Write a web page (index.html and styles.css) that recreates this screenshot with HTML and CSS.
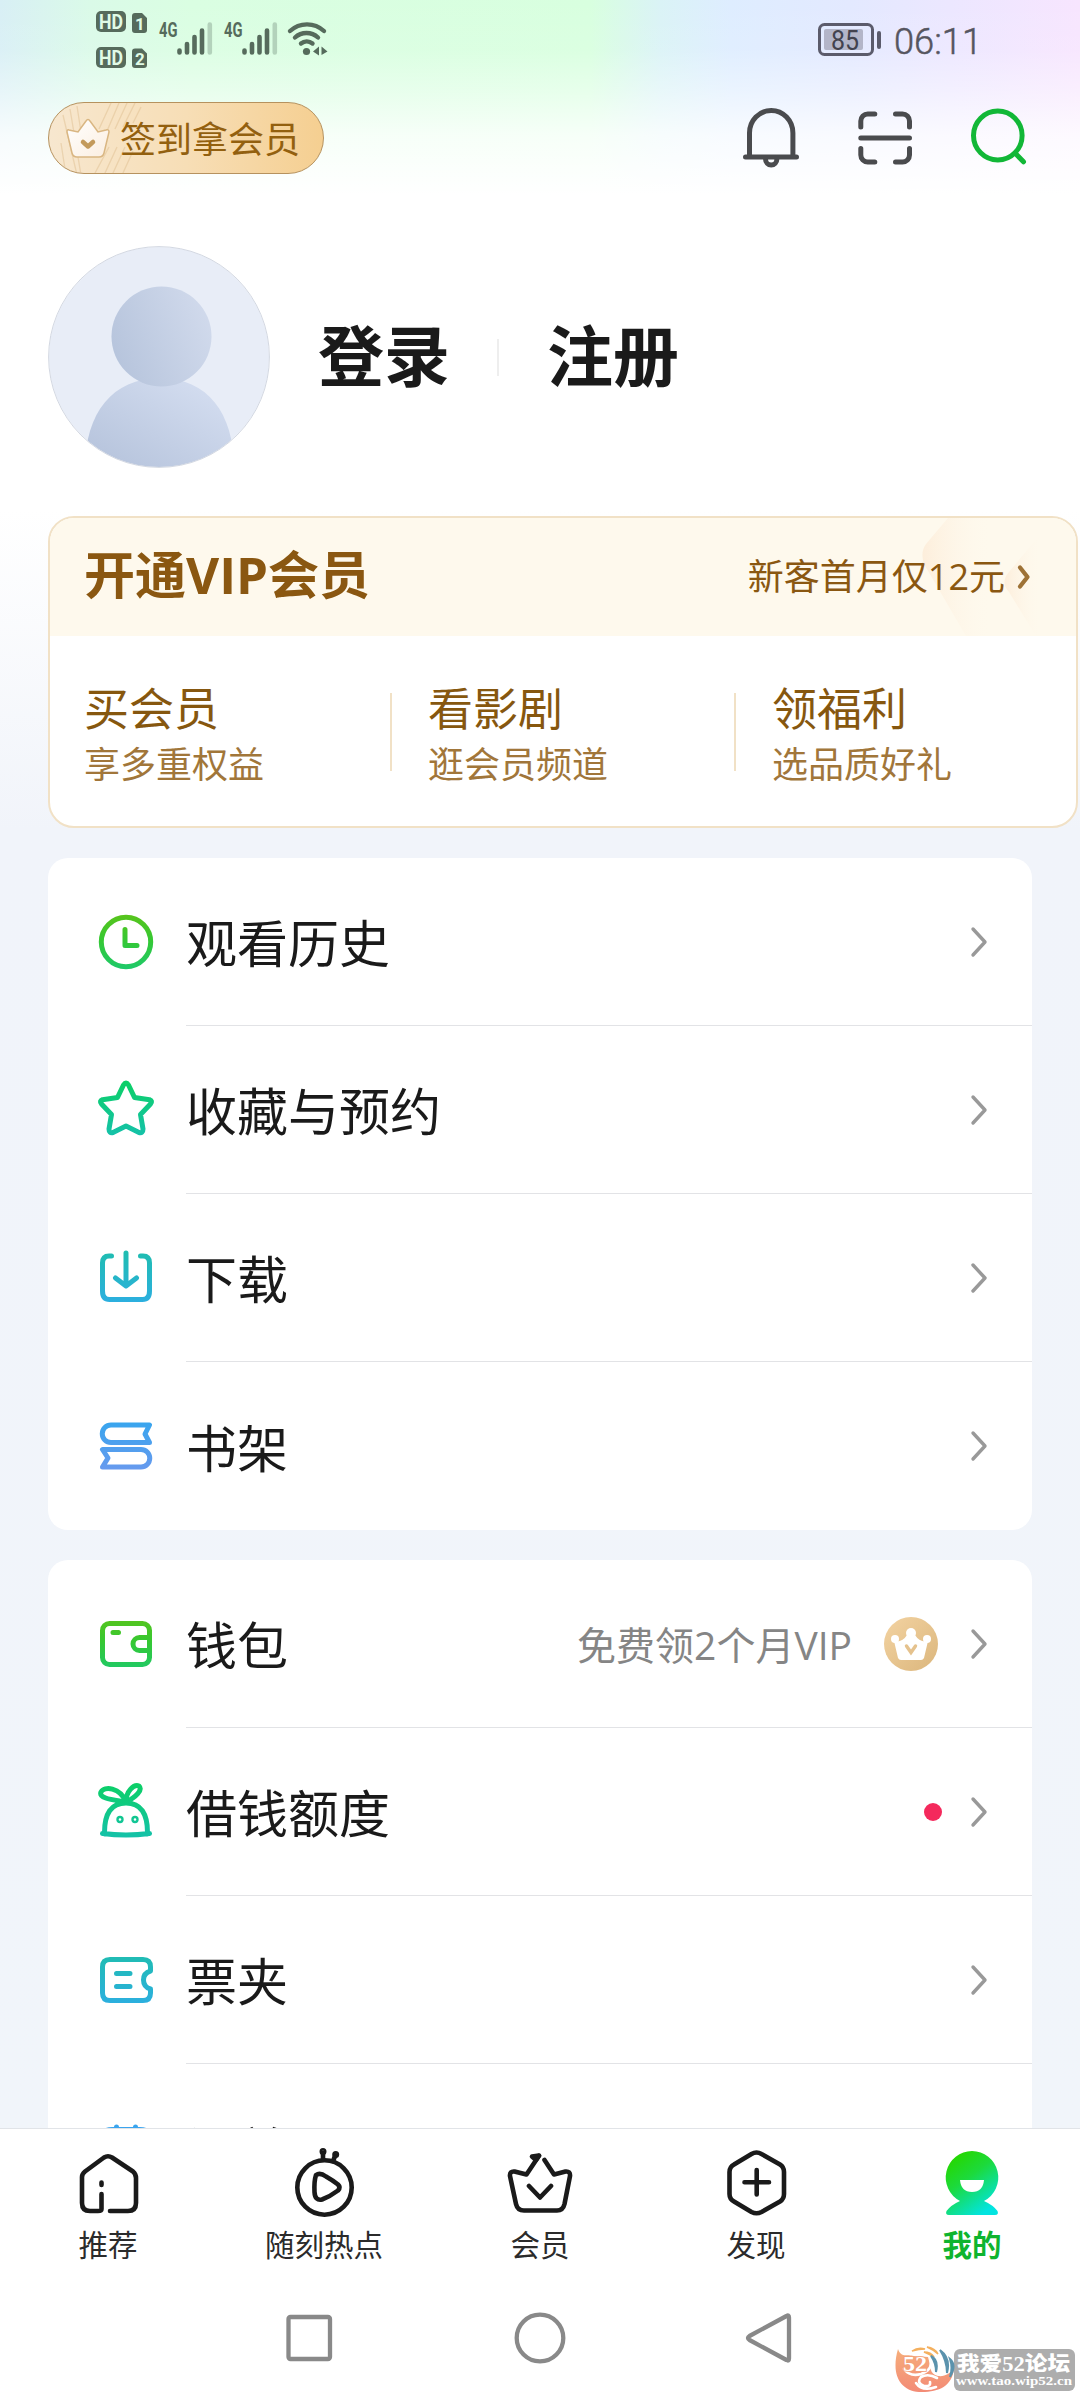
FILE: index.html
```html
<!DOCTYPE html>
<html lang="zh-CN">
<head>
<meta charset="utf-8">
<title>我的</title>
<link rel="stylesheet" href="styles.css">
</head>
<body>
<svg class="defs" width="0" height="0" aria-hidden="true">
  <defs>
    <linearGradient id="g1" gradientUnits="userSpaceOnUse" x1="0" y1="3" x2="0" y2="57"><stop offset="0" stop-color="#58c41c"/><stop offset=".45" stop-color="#36c832"/><stop offset="1" stop-color="#1ec96a"/></linearGradient>
    <linearGradient id="g2" gradientUnits="userSpaceOnUse" x1="0" y1="3" x2="0" y2="57"><stop offset="0" stop-color="#0ccf68"/><stop offset="1" stop-color="#15c1ab"/></linearGradient>
    <linearGradient id="g3" gradientUnits="userSpaceOnUse" x1="0" y1="3" x2="0" y2="57"><stop offset="0" stop-color="#1fbdb0"/><stop offset="1" stop-color="#2daee2"/></linearGradient>
    <linearGradient id="g4" gradientUnits="userSpaceOnUse" x1="0" y1="3" x2="0" y2="57"><stop offset="0" stop-color="#35a6ee"/><stop offset="1" stop-color="#6a99ee"/></linearGradient>
    <linearGradient id="gava" x1="0" y1="1" x2="1" y2="0"><stop offset="0" stop-color="#b3c1da"/><stop offset="1" stop-color="#d8e1f3"/></linearGradient>
    <linearGradient id="ghead" x1="0" y1=".7" x2="1" y2=".3"><stop offset="0" stop-color="#b6c4dc"/><stop offset="1" stop-color="#d1daec"/></linearGradient>
    <linearGradient id="gcoin" x1="0" y1="0" x2="1" y2="1"><stop offset="0" stop-color="#f3d3a2"/><stop offset="1" stop-color="#dbb67c"/></linearGradient>
    <linearGradient id="gme" gradientUnits="userSpaceOnUse" x1="15" y1="15" x2="52" y2="66"><stop offset="0" stop-color="#25d700"/><stop offset=".4" stop-color="#1cda3c"/><stop offset="1" stop-color="#02e4e0"/></linearGradient>
    <linearGradient id="gcrown" x1="0" y1="0" x2="1" y2="1"><stop offset="0" stop-color="#fff"/><stop offset="1" stop-color="#fbeee0"/></linearGradient>
    <linearGradient id="glogo" x1="0" y1="0" x2="0" y2="1"><stop offset="0" stop-color="#f6ae7b"/><stop offset="1" stop-color="#f38b76"/></linearGradient>
    <symbol id="chev" viewBox="0 0 20 36"><path d="M4 5 L16 18 L4 31" fill="none" stroke="#999" stroke-width="3.4" stroke-linecap="round" stroke-linejoin="round"/></symbol>
  </defs>
</svg>
<div class="page">
  <main class="content">
    <div class="status">
      <svg class="status-left" width="240" height="64" viewBox="92 8 240 64">
        <g fill="#566b5c">
          <rect x="96" y="11" width="30" height="21" rx="5"/><rect x="96" y="47" width="30" height="21" rx="5"/>
          <path d="M135 13h7l5 5v12a3 3 0 0 1-3 3h-9a3 3 0 0 1-3-3V16a3 3 0 0 1 3-3zM135 48.500h7l5 5V65a3 3 0 0 1-3 3h-9a3 3 0 0 1-3-3V51.500a3 3 0 0 1 3-3z"/>
        </g>
        <g class="hd"><text x="99" y="28.500" textLength="24" lengthAdjust="spacingAndGlyphs">HD</text><text x="99" y="64.500" textLength="24" lengthAdjust="spacingAndGlyphs">HD</text><text x="135" y="29.500" class="sm">1</text><text x="135" y="65" class="sm">2</text></g>
        <g class="fourg"><text x="159" y="37" textLength="18.500" lengthAdjust="spacingAndGlyphs">4G</text><text x="224" y="37" textLength="18.500" lengthAdjust="spacingAndGlyphs">4G</text></g>
        <g stroke="#566b5c" stroke-width="4.600" stroke-linecap="round"><path d="M179.500 50.500v2M187 44v8.500M194.500 37v15.500M202 30.500v22"/><path d="M244.500 50.500v2M252 44v8.500M259.500 37v15.500M267 30.500v22"/><path d="M209.800 24.500v28M274.800 24.500v28" stroke="#b3d2bb"/></g>
        <g fill="none" stroke="#566b5c" stroke-width="4.400" stroke-linecap="round"><path d="M290 31a25 25 0 0 1 34 0M295 37.500a17 17 0 0 1 23 0M301 43.500a9 9 0 0 1 11.500 0"/></g>
        <circle cx="306.500" cy="51.500" r="3.600" fill="#566b5c"/><path d="M313 51.500l6-5v9zM321.500 46.500l6 5l-6 3.500z" fill="#566b5c"/>
      </svg>
      <svg class="status-right" width="170" height="44" viewBox="814 18 170 44">
        <rect x="819.500" y="24.500" width="53" height="30" rx="5" fill="none" stroke="#5b5b6b" stroke-width="3"/>
        <rect x="824" y="29" width="39" height="21" rx="2" fill="#b3b5c8"/><rect x="877" y="31" width="4" height="18" rx="2" fill="#5b5b6b"/>
        <text x="831" y="49.500" class="bat" textLength="28" lengthAdjust="spacingAndGlyphs">85</text>
        <text x="894" y="54" class="time" textLength="88" lengthAdjust="spacingAndGlyphs">06:11</text>
      </svg>
    </div>
    <header class="top">
      <div class="pill">
        <svg class="pill-lines" width="276" height="72" viewBox="0 0 276 72"><path d="M14 12l14 60M21 6l11 66M28 3l4 26M12 40l4 26M62 0L50 26M70 0L58 28M78 0L66 26M86 0L74 24M92 4L84 20M60 44L46 70M68 44L56 70M76 44L64 70M84 48L74 70" stroke="#dfc091" stroke-opacity=".5" stroke-width="1.300" fill="none"/></svg>
        <svg class="pill-crown" width="46" height="42" viewBox="0 0 46 42"><path d="M4 13Q2 12 2 15L7 36Q8 40 12 40H34Q38 40 39 36L44 15Q44 12 41 13L33 15L25 4Q23 1 21 4L13 15Z" fill="url(#gcrown)" stroke="#d9b682" stroke-width="1.500"/><path d="M18 25l5 4.500l5-4.500" fill="none" stroke="#c39a5c" stroke-width="4.500" stroke-linecap="round" stroke-linejoin="round"/></svg>
        <span>签到拿会员</span>
      </div>
      <div class="actions">
        <svg width="60" height="64" viewBox="741 106 60 64" fill="none" stroke="#4a4b4e" stroke-width="5" stroke-linecap="round"><path d="M749.500 156V133a21.700 22.500 0 0 1 43.400 0V156M745.500 157h51M765.500 159a5.700 6 0 0 0 11.400 0"/></svg>
        <svg width="60" height="64" viewBox="855 106 60 64" fill="none" stroke="#4a4b4e" stroke-width="5" stroke-linecap="round"><path d="M860.800 127v-6a7 7 0 0 1 7-7h7M895.500 114h7a7 7 0 0 1 7 7v6M909.500 148.500v6.500a7 7 0 0 1-7 7h-7M874.800 162h-7a7 7 0 0 1-7-7v-6.500M860.800 138h48.700"/></svg>
        <svg width="60" height="64" viewBox="969 106 60 64" fill="none" stroke="#12b737" stroke-width="5" stroke-linecap="round"><ellipse cx="997.800" cy="135.500" rx="24.300" ry="24.500"/><path d="M1015 153l8.500 8.800"/></svg>
      </div>
    </header>
    <section class="profile">
      <svg class="avatar" width="222" height="222" viewBox="0 0 222 222"><clipPath id="avc"><circle cx="111" cy="111" r="110"/></clipPath><g clip-path="url(#avc)"><circle cx="111" cy="111" r="111" fill="#e8edf7"/><path d="M37 222C37 168 64 132 112 132S186 168 186 222Z" fill="url(#gava)"/><circle cx="113.500" cy="90.500" r="50" fill="url(#ghead)"/></g><circle cx="111" cy="111" r="110.400" fill="none" stroke="#d3d8e2"/></svg>
      <a class="login">登录</a><i class="split"></i><a class="login next">注册</a>
    </section>
    <section class="vip">
      <div class="vip-head">
        <svg class="vip-deco" width="170" height="118" viewBox="0 0 170 118"><defs><linearGradient id="d1"><stop offset="0" stop-color="#fdeedb"/><stop offset=".5" stop-color="#fef8ec" stop-opacity="0"/></linearGradient></defs><path d="M20 26L42 0H150L104 118H60L18 46Q14 34 20 26Z" fill="url(#d1)"/><path d="M103 54L148 0H170V118H130L103 74Q94 64 103 54Z" fill="url(#d1)"/></svg>
        <h2>开通VIP会员</h2><span class="offer">新客首月仅12元</span>
        <svg class="offer-chev" width="16" height="28" viewBox="0 0 16 28"><path d="M4 4.500L11.500 14L4 23.500" fill="none" stroke="#9e7236" stroke-width="4.300" stroke-linecap="round" stroke-linejoin="round"/></svg>
      </div>
      <div class="vip-cols">
        <div><b>买会员</b><span>享多重权益</span></div>
        <div><b>看影剧</b><span>逛会员频道</span></div>
        <div><b>领福利</b><span>选品质好礼</span></div>
      </div>
    </section>
    <section class="card">
      <div class="row"><svg class="ico" viewBox="0 0 60 60" stroke="url(#g1)"><circle cx="30" cy="30" r="24.700"/><path d="M29 17.500V33.500H41"/></svg><div class="line"><span>观看历史</span><svg class="chev"><use href="#chev"/></svg></div></div>
      <div class="row"><svg class="ico" viewBox="0 0 60 60" stroke="url(#g2)"><path d="M27.500 5Q30 1 32.500 5L38.500 17.500L53.500 19.700Q57 21 54.500 24L44.500 34.500L47 49Q47 53.500 43 52.500L30 46L17 52.500Q13 53.500 13 49L15.500 34.500L5.500 24Q3 21 6.500 19.700L21.500 17.500Z"/></svg><div class="line"><span>收藏与预约</span><svg class="chev"><use href="#chev"/></svg></div></div>
      <div class="row"><svg class="ico" viewBox="0 0 60 60" stroke="url(#g3)"><path d="M15.500 8H13Q6.500 8 6.500 15V43Q6.500 51.500 13.500 51.500H46.500Q53.500 51.500 53.500 43V15Q53.500 8 47 8H44.500M30 5V37.500M19.500 30L30 38L40.500 30"/></svg><div class="line"><span>下载</span><svg class="chev"><use href="#chev"/></svg></div></div>
      <div class="row"><svg class="ico" viewBox="0 0 60 60" stroke="url(#g4)"><path d="M53.500 9H15A8.700 8.700 0 0 0 15 26.500H53.500L49 18Z M6.500 33.500H45A8.700 8.700 0 0 1 45 51H6.500L12 42Z"/></svg><div class="line"><span>书架</span><svg class="chev"><use href="#chev"/></svg></div></div>
    </section>
    <section class="card second">
      <div class="row"><svg class="ico" viewBox="0 0 60 60" stroke="url(#g1)"><rect x="6.500" y="9.500" width="47" height="41" rx="7"/><path d="M52 23.500H43.500A6.500 6.500 0 0 0 43.500 36.500H52M17 18.500H22.500"/></svg><div class="line"><span>钱包</span><em>免费领2个月VIP</em><svg class="coin" width="54" height="54" viewBox="0 0 54 54"><circle cx="27" cy="27" r="27" fill="url(#gcoin)"/><circle cx="27" cy="16" r="5" fill="#fff"/><circle cx="11" cy="22" r="4" fill="#fff"/><circle cx="43" cy="22" r="4" fill="#fff"/><path d="M10 24Q18 26 23 18H31Q36 26 44 24L40 41Q39 43 37 43H17Q15 43 14 41Z" fill="#fff"/><path d="M22.500 29L27 35.500L31.500 29" fill="none" stroke="#e5c28d" stroke-width="3.400" stroke-linecap="round"/></svg><svg class="chev"><use href="#chev"/></svg></div></div>
      <div class="row"><svg class="ico" viewBox="0 0 60 60" stroke="url(#g2)"><path d="M8.500 52Q8 21 30 21T51.500 52M6.500 51.500Q30 54.500 53.500 51.500M30 20C24 5 8 4 5 10C2 17 20 18 30 20ZM30 20C30 9 38 2 43 4C47 8 40 15 30 20Z"/><circle cx="24" cy="37.500" r="1.200"/><circle cx="39" cy="37.500" r="1.200"/></svg><div class="line"><span>借钱额度</span><i class="dot"></i><svg class="chev"><use href="#chev"/></svg></div></div>
      <div class="row"><svg class="ico" viewBox="0 0 60 60" stroke="url(#g3)"><path d="M14 9.500H47Q54.500 9.500 54.500 17V21Q47.500 23 47.500 30T54.500 39V43Q54.500 50.500 47 50.500H14Q6.500 50.500 6.500 43V17Q6.500 9.500 14 9.500ZM20.500 23.500H34M20.500 36.500H34"/></svg><div class="line"><span>票夹</span><svg class="chev"><use href="#chev"/></svg></div></div>
      <div class="row"><svg class="ico" viewBox="0 0 60 60" stroke="url(#g4)"><path d="M20.500 9V14M39.500 9V14M9 14Q10 11.500 16 11.500H44Q50 11.500 51 14V52H9Z"/></svg><div class="line"><span>订单</span><svg class="chev"><use href="#chev"/></svg></div></div>
    </section>
  </main>
  <footer class="bottom">
    <nav class="tabs">
      <a><svg width="76" height="76" viewBox="70 2145 76 76"><path d="M101.500 2182.500v2.500M101.500 2194V2209Q101.500 2211 98 2211H90Q82 2211 82 2203V2177Q82 2174 85 2171.500L104 2157.500Q108 2155 112 2157.500L133 2171.500Q136 2174 136 2178V2203Q136 2211 128 2211H110"/></svg><span>推荐</span></a>
      <a><svg width="76" height="76" viewBox="286 2145 76 76"><circle cx="324.500" cy="2187.500" r="27.200"/><path d="M316 2175Q320 2172 326 2176.500Q333 2180.500 338 2184.500Q341 2187.500 338 2190.500Q330 2196.500 322 2199.500Q315 2201 314.500 2192Q314 2181 316 2175ZM323 2152.500V2159M335.500 2155L333 2161"/><circle cx="323" cy="2151.500" r="1.200"/><circle cx="335.700" cy="2154.500" r="1.200"/></svg><span>随刻热点</span></a>
      <a><svg width="76" height="76" viewBox="502 2145 76 76"><path d="M539 2155.800L526.500 2174.500L514.500 2171.500Q509.500 2171 510 2176L516 2204Q517.500 2210.500 524 2210.500H557Q563 2210.500 564.500 2204L570 2176Q570.500 2171 565.500 2171.500L554 2174.500L544.500 2160M529 2186L540 2197.500L551 2186"/><path d="M532 2156.500L539 2155.500L536 2160Z"/></svg><span>会员</span></a>
      <a><svg width="76" height="76" viewBox="718 2145 76 76"><path d="M751.500 2154Q756.500 2151 761.500 2154L780 2164.500Q784 2167 784 2172V2194Q784 2199 780 2201.500L761.500 2212Q756.500 2214.500 751.500 2212L734 2201.500Q729.500 2199 729.500 2194V2172Q729.500 2167 734 2164.500ZM756.700 2170V2194.500M744.500 2182.300H769"/></svg><span>发现</span></a>
      <a class="on"><svg width="76" height="76" viewBox="0 0 76 76"><path d="M38 6A26.500 26.500 0 0 1 50 56Q59 60 63.500 66Q65 70 61 70H15Q11 70 12.500 66Q17 60 26 56A26.500 26.500 0 0 1 38 6Z"/><path d="M26 35H50Q49 47 38 47T26 35Z" fill="#fff"/></svg><span>我的</span></a>
    </nav>
    <div class="sys">
      <svg width="54" height="54" viewBox="0 0 54 54"><rect x="6.500" y="6" width="41.500" height="42" rx="2"/></svg>
      <svg width="54" height="54" viewBox="0 0 54 54"><circle cx="27" cy="27" r="23.300"/></svg>
      <svg width="54" height="54" viewBox="4 0 54 54"><path d="M46.500 5Q49 3.500 49 6.500V47.500Q49 50.500 46.500 49L9.500 29Q6.500 27 9.500 25Z"/></svg>
    </div>
  </footer>
  <div class="mark">
    <svg width="64" height="50" viewBox="0 0 64 50"><path d="M4 4C7 13 13 9 20 11L34 12C37 22 35 29 44 31C51 32 56 28 60 24C58 41 45 47 28 47C8 47-4 32 4 4Z" fill="url(#glogo)"/><path d="M10 24Q16 32 27 29Q36 26 37 19M43 33Q34 28 27 32Q22 38 30 41Q37 42 36 37M22 38Q28 47 42 42" fill="none" stroke="#fff" stroke-width="2.600" stroke-linecap="round"/><path d="M18 6Q24 2 31 4Q25 4 18 6ZM33 2Q41 3 44 9Q40 5 33 2ZM30 7Q37 7 40 12Q35 9 30 7Z" fill="#f4b05f" stroke="#f4b05f" stroke-width="1.500"/><path d="M46 5Q57 13 53 28Q53 16 46 5ZM37 11Q45 15 42 27Q42 18 37 11ZM56 14Q63 20 56 32Q59 23 56 14Z" fill="#5b93ad" stroke="#5b93ad" stroke-width="2"/><text x="9" y="26" class="m52" textLength="24" lengthAdjust="spacingAndGlyphs">52</text></svg>
    <div class="mark-text"><svg width="120" height="42" viewBox="0 0 120 42"><text x="3" y="22" class="m1" textLength="113" lengthAdjust="spacingAndGlyphs">我爱52论坛</text><text x="2" y="36" class="m2" textLength="116" lengthAdjust="spacingAndGlyphs">www.tao.wip52.cn</text></svg></div>
  </div>
</div>
</body>
</html>
```
FILE: styles.css
```css
* { box-sizing: border-box; }
body { margin: 0; font-family: "Open Sans", "Noto Sans CJK SC", sans-serif; color: #1a1a1a; }
svg { display: block; flex: none; }
.defs { position: absolute; }
.page { position: relative; width: 1080px; height: 2400px; display: flex; flex-direction: column; overflow: hidden; }
.content {
  flex: 1; min-height: 0; overflow: hidden; padding-left: 48px;
  background:
    linear-gradient(180deg, rgba(255,255,255,0) 0, rgba(255,255,255,.08) 50px, rgba(255,255,255,.38) 90px, rgba(255,255,255,.78) 135px, #fff 195px) 0 0 / 100% 200px no-repeat,
    linear-gradient(90deg, #d8eff5 0, #dafae8 90px, #dafee2 190px, #d8ffdf 590px, #daf3f6 660px, #deedff 730px, #e3e9ff 850px, #ece7ff 950px, #f7e5fe 1080px) 0 0 / 100% 200px no-repeat,
    linear-gradient(180deg, #fff 0, #fff 510px, #f1f4fa 830px, #f1f5fa 100%);
}

.status { height: 102px; display: flex; justify-content: space-between; align-items: flex-start; }
.status-left { margin: 8px 0 0 44px; }
.status-right { margin: 18px 96px 0 0; }
.status text { font-family: Roboto, sans-serif; }
.hd text { font-weight: 700; font-size: 21px; fill: #e0fbe6; }
.hd .sm { font-size: 17px; }
.fourg text { font-weight: 700; font-size: 21px; fill: #566b5c; }
.bat { font-size: 28px; fill: #42424e; }
.time { font-size: 36.500px; font-weight: 300; fill: #55555f; stroke: #55555f; stroke-width: .5px; }

.top { height: 72px; display: flex; justify-content: space-between; align-items: center; padding-right: 51px; }
.pill {
  position: relative; width: 276px; height: 72px; display: flex; align-items: center; gap: 9px; padding-left: 16px;
  border: 1px solid #b6925e; border-radius: 36px; overflow: hidden;
  background: linear-gradient(90deg, #f7e7cf, #f7deb6 50%, #f5cf91);
  font-size: 36px; line-height: 50px; color: #93600f;
}
.pill-lines { position: absolute; inset: 0; }
.pill-crown, .pill span { position: relative; }
.pill span { padding-top: 4px; }
.actions { display: flex; gap: 54px; }

.profile { height: 222px; margin-top: 72px; display: flex; align-items: center; }
.login { font-size: 66px; font-weight: 700; line-height: 90px; margin-left: 48px; padding-bottom: 4px; }
.login.next { margin-left: 48px; }
.split { width: 2px; height: 37px; background: #eee; margin-left: 47px; }

.vip { width: 1030px; height: 312px; margin-top: 48px; border: 2px solid #f1e1c6; border-radius: 26px; background: #fff; overflow: hidden; }
.vip-head { position: relative; height: 118px; padding: 0 44px 0 34px; display: flex; align-items: center; background: #fef9ed; color: #8a5711; }
.vip-deco { position: absolute; right: 0; top: 0; }
.vip-head h2 { margin: 0; padding-bottom: 6px; font-size: 51px; line-height: 70px; font-weight: 700; }
.offer { position: relative; margin-left: auto; padding-bottom: 5px; font-size: 36px; }
.offer-chev { position: relative; margin-left: 11px; }
.vip-cols { display: grid; grid-template-columns: 340px 344px 1fr; padding-top: 46px; }
.vip-cols div { display: flex; flex-direction: column; padding-left: 34px; position: relative; }
.vip-cols div + div { padding-left: 38px; }
.vip-cols div + div::before { content: ""; position: absolute; left: 0; top: 11px; width: 2px; height: 78px; background: #f1e1c6; }
.vip-cols b { font-weight: 400; font-size: 45px; line-height: 54px; color: #86570f; }
.vip-cols span { margin-top: 4px; font-size: 36px; line-height: 50px; color: #a1763a; }

.card { width: 984px; margin-top: 30px; padding-left: 48px; border-radius: 20px; background: #fff; }
.row { display: flex; height: 168px; }
.ico { width: 60px; height: 60px; margin: 54px 30px 0 0; fill: none; stroke-width: 5; stroke-linecap: round; stroke-linejoin: round; }
.line { flex: 1; display: flex; align-items: center; padding-right: 43px; border-bottom: 1px solid #e2e3e6; font-size: 51px; }
.line > span { margin-right: auto; padding-top: 3px; line-height: 70px; }
.row:last-child .line { border-bottom: 0; }
.second .row:last-child .line > span { padding-top: 3px; }
.chev { width: 20px; height: 36px; }
.line em { font-style: normal; font-size: 39px; line-height: 54px; padding-top: 2px; color: #858585; margin-right: 32px; }
.coin { margin-right: 31px; }
.dot { width: 18px; height: 18px; border-radius: 50%; background: #f4295c; margin-right: 27px; }

.bottom { height: 272px; flex: none; background: #fff; border-top: 1px solid #e1e4e8; }
.tabs { height: 150px; display: grid; grid-template-columns: repeat(5, 1fr); }
.tabs a { display: flex; flex-direction: column; align-items: center; padding-top: 16px; }
.tabs svg { fill: none; stroke: #1a1a1a; stroke-width: 4.600; stroke-linecap: round; stroke-linejoin: round; }
.tabs .on svg { fill: url(#gme); stroke: none; }
.tabs span { margin-top: 3px; font-size: 29.500px; line-height: 42px; color: #2b2b2b; }
.tabs .on span { font-weight: 700; color: #0fb42f; }
.sys { display: flex; justify-content: center; gap: 177px; padding-top: 32px; }
.sys svg { fill: none; stroke: #898989; stroke-width: 4.300; stroke-linejoin: round; }

.mark { position: absolute; left: 894px; top: 2345px; display: flex; align-items: center; }
.mark > svg { margin-right: -4px; z-index: 1; }
.mark-text { width: 121px; height: 42px; background: #adadad; border-radius: 6px; }
.m52 { font: 700 20px "Liberation Serif", serif; fill: #fff; stroke: #f3a07a; stroke-width: 1.500px; paint-order: stroke; }
.m1 { font: 900 20px "Liberation Serif", "Noto Sans CJK SC", serif; fill: #fff; }
.m2 { font: 700 13px "Liberation Serif", serif; fill: #fff; }
```
